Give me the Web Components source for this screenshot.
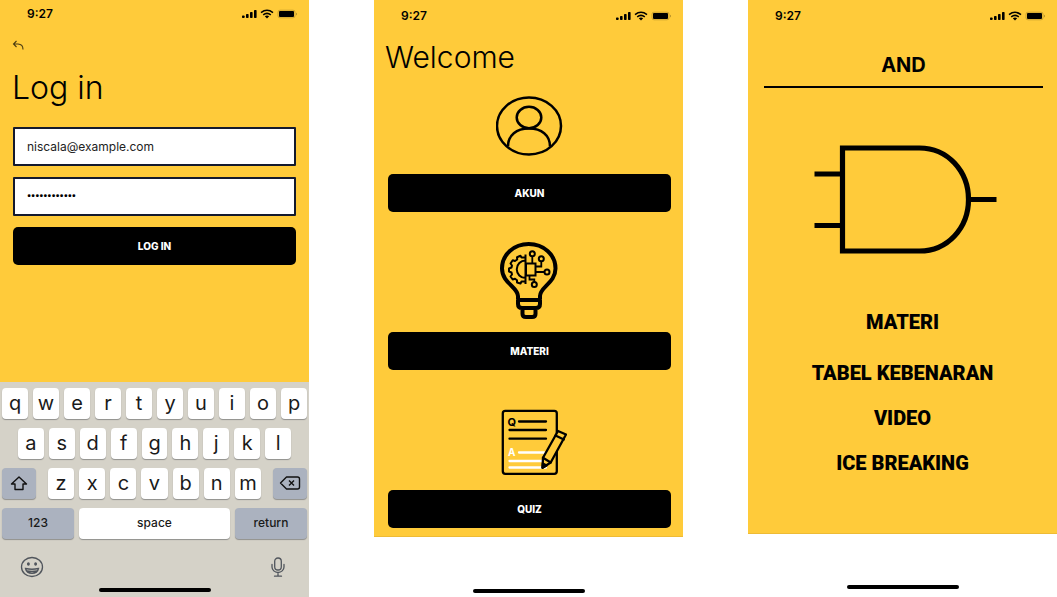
<!DOCTYPE html>
<html lang="id">
<head>
<meta charset="utf-8">
<meta name="viewport" content="width=device-width, initial-scale=1">
<title>Niscala</title>
<style>
  :root { --yellow: #ffcb3a; --ink: #000; }
  body { margin: 0; background: #fff; color: var(--ink); font-family: Inter, "Liberation Sans", sans-serif; }
</style>
</head>
<body>
<app-board></app-board>

<script>
const define = (name, html, setup) => customElements.define(name, class extends HTMLElement {
  constructor() {
    super();
    this.attachShadow({ mode: 'open' }).innerHTML = html;
  }
  connectedCallback() { if (setup) setup(this, this.shadowRoot); }
});

define('status-bar', `
  <style>
    :host { display: flex; align-items: center; justify-content: space-between; height: var(--bar, 32px); padding: 0 12px 0 27px; font-size: 12px; line-height: 16px; font-weight: 600; }
    svg { display: block; }
  </style>
  <span>9:27</span>
  <svg width="55" height="10" viewBox="0 0 55 10" role="img" aria-label="Signal, Wi-Fi, battery">
    <rect x="0" y="6.5" width="2.6" height="2.5" rx=".7"/><rect x="4" y="5" width="2.6" height="4" rx=".7"/>
    <rect x="8" y="3" width="2.6" height="6" rx=".7"/><rect x="12" y="1" width="2.6" height="8" rx=".7"/>
    <g fill="none" stroke="#000" stroke-width="1.6"><path d="M19 3.6Q25 -1 31 3.6"/><path d="M21.2 5.8Q25 3 28.8 5.8"/></g>
    <path d="M22.8 7.2Q25 5.6 27.2 7.2L25 9.4z"/>
    <rect x="36" y="1.2" width="17" height="7.6" rx="2" fill="none" stroke="#000" stroke-opacity=".25" stroke-width=".8"/>
    <rect x="37" y="2.1" width="15" height="5.8" rx="1"/><path d="M54 3.8v2.6q1-.4 1-1.3T54 3.8z" opacity=".3"/>
  </svg>`);

define('home-indicator', `
  <style>:host { display: block; width: 112px; height: 4px; border-radius: 2px; background: #000; margin: 0 auto; }</style>`);

define('solid-button', `
  <style>
    :host { display: block; }
    button { display: block; width: 100%; height: 38px; border: 0; border-radius: 5px; background: #000; color: #fff; font: 800 10px/16px Inter, "Liberation Sans", sans-serif; padding: 0; }
  </style>
  <button type="button"><slot></slot></button>`);

define('text-field', `
  <style>
    :host { display: block; }
    input { display: block; box-sizing: border-box; width: 100%; height: 39px; border: 2px solid #141a2e; border-radius: 1px; padding: 0 12px; background: #fff; color: #222; font: 400 12px/16px Inter, sans-serif; outline: 0; }
    input[type=password] { font-family: Roboto, sans-serif; font-size: 11px; font-weight: 900; color: #000; }
  </style>
  <input>`,
  (el, root) => {
    const input = root.querySelector('input');
    input.type = el.getAttribute('type');
    input.setAttribute('aria-label', el.getAttribute('name'));
    input.value = el.getAttribute('value');
  });

define('key-cap', `
  <style>
    :host { display: block; flex: 1 1 0; min-width: 0; }
    :host([side]) { flex: 0 0 34px; }
    :host([wide]) { flex: 72 1 0; }
    :host([space]) { flex: 151 1 0; }
    button { display: flex; align-items: center; justify-content: center; width: 100%; height: 31px; padding: 0 0 2px; border: 0; border-radius: 4px; background: #fff; color: #1a1a1a; box-shadow: 0 1px 1px #8f8f8c; font: 400 20px/24px Inter, sans-serif; }
    :host([wide]) button, :host([side]) button { background: #abb2bf; }
    :host([wide]) button, :host([space]) button { font-size: 12px; font-weight: 500; }
  </style>
  <button type="button"><slot></slot></button>`);

define('soft-keyboard', `
  <style>
    :host { display: flex; flex-direction: column; gap: 9px; padding: 6px 2px 5px; background: #d5d2c8; box-sizing: border-box; }
    .row { display: flex; gap: 5px; }
    .second { padding: 0 16px; }
    .letters { flex: 1; display: flex; gap: 5px; margin: 0 7px; }
    .tools { display: flex; justify-content: space-between; padding: 7px 22px 0 18px; flex: 1; }
    .tools button { padding: 0; border: 0; background: none; height: 24px; }
    svg { display: block; }
  </style>
  <div class="row" id="r1"></div>
  <div class="row second" id="r2"></div>
  <div class="row">
    <key-cap side><svg width="18" height="16" viewBox="0 0 18 16" fill="none" stroke="#111" stroke-width="1.4" stroke-linejoin="round" role="img" aria-label="Shift"><path d="M9 2L1.5 9H5v5.5h8V9h3.5z"/></svg></key-cap>
    <div class="letters" id="r3"></div>
    <key-cap side><svg width="22" height="16" viewBox="0 0 22 16" fill="none" stroke="#111" stroke-width="1.4" stroke-linejoin="round" role="img" aria-label="Delete"><path d="M7.5 2H18.5q2 0 2 2v8q0 2-2 2H7.5L1.5 8z"/><path d="M10 5.5l5 5M15 5.5l-5 5"/></svg></key-cap>
  </div>
  <div class="row"><key-cap wide>123</key-cap><key-cap space>space</key-cap><key-cap wide>return</key-cap></div>
  <div class="tools">
    <button type="button" aria-label="Emoji"><svg width="24" height="22" viewBox="0 0 24 22" fill="none" stroke="#50555c" stroke-width="1.3"><ellipse cx="12" cy="11" rx="10.5" ry="9.5"/><path d="M5.5 12.5Q12 14 18.5 12.5Q17.5 17.3 12 17.3T5.5 12.5zM7 15Q12 16 17 15"/><ellipse cx="8.4" cy="8" rx=".8" ry="1.1" fill="#50555c"/><ellipse cx="15.6" cy="8" rx=".8" ry="1.1" fill="#50555c"/></svg></button>
    <button type="button" aria-label="Dictate"><svg width="14" height="22" viewBox="0 0 14 22" fill="none" stroke="#50555c" stroke-width="1.3" stroke-linecap="round"><rect x="3.7" y="2" width="6.6" height="12" rx="3.3"/><path d="M1 8.5v2.5a6 5.5 0 0 0 12 0V8.5M7 16.5V20M3.5 20.2h7"/></svg></button>
  </div>
  <home-indicator></home-indicator>`,
  (el, root) => {
    ['qwertyuiop', 'asdfghjkl', 'zxcvbnm'].forEach((letters, i) => {
      root.getElementById('r' + (i + 1)).innerHTML = [...letters].map(c => `<key-cap>${c}</key-cap>`).join('');
    });
  });

define('login-screen', `
  <style>
    :host { --bar: 27px; display: flex; flex-direction: column; min-height: 100vh; background: var(--yellow); }
    .back { display: block; border: 0; background: none; padding: 0; margin: 13px 0 0 12px; }
    svg { display: block; }
    h1 { margin: 17px 12px 19px; font-size: 32px; line-height: 40px; font-weight: 300; }
    form { display: flex; flex-direction: column; gap: 11px; padding: 0 13px; }
    soft-keyboard { margin-top: auto; height: 215px; }
  </style>
  <status-bar></status-bar>
  <button class="back" type="button" aria-label="Back"><svg width="12" height="11" viewBox="0 0 12 11" fill="none" stroke="#4a3b12" stroke-width="1.1"><path d="M4.5 1L1.5 4l3 3M1.5 4H6q5 .2 5 5.5"/></svg></button>
  <h1>Log in</h1>
  <form>
    <text-field name="Email" type="email" value="niscala@example.com"></text-field>
    <text-field name="Password" type="password" value="niscala12345"></text-field>
    <solid-button>LOG IN</solid-button>
  </form>
  <soft-keyboard></soft-keyboard>`);

define('menu-card', `
  <style>
    :host { display: block; }
    .picture { display: flex; align-items: flex-end; justify-content: center; height: 90px; box-sizing: border-box; padding-bottom: 13px; }
  </style>
  <div class="picture"><slot name="picture"></slot></div>
  <solid-button><slot></slot></solid-button>`);

define('welcome-screen', `
  <style>
    :host { display: flex; flex-direction: column; min-height: 100vh; }
    main { background: var(--yellow); border-bottom: 1px solid #eebb35; padding-bottom: 8px; }
    h1 { margin: 5px 11px 7px; font-size: 30px; line-height: 40px; font-weight: 300; }
    nav { display: grid; gap: 30px; padding: 0 12px 0 14px; }
    svg { display: block; }
    home-indicator { margin-top: auto; margin-bottom: 4px; }
  </style>
  <main>
    <status-bar></status-bar>
    <h1>Welcome</h1>
    <nav>
      <menu-card>AKUN
        <svg slot="picture" width="67" height="65" viewBox="0 0 67 65" fill="none" stroke="#000" stroke-width="2.5"><ellipse cx="33" cy="30" rx="32" ry="28.5"/><ellipse cx="33" cy="21.5" rx="12.3" ry="10.7"/><path d="M12 50.5C12 39 20.5 32.5 33 32.5S54 39 54 50.5"/></svg>
      </menu-card>
      <menu-card>MATERI
        <svg slot="picture" width="60" height="77" viewBox="0 0 60 77" fill="none" stroke="#000" stroke-width="2">
          <path stroke-width="4" stroke-linejoin="round" d="M18 57V54C18 45 2 41 2 26.5C2 12.5 14 2 28.7 2S55.5 12.5 55.5 26.5C55.5 41 40 45 40 54V57M18 58H40V62Q40 66 36 66H22Q18 66 18 62zM22.5 67V72Q22.5 75 26 75H32Q35.5 75 35.5 72V67"/>
          <path d="M25.5 12.5V42M25.5 18.5A8.7 8.7 0 0 0 25.5 36"/>
          <path stroke-linejoin="round" d="M25 15.5H21.5L20.5 13.8L17 15.2L17.2 17.5L15 19L12.7 18.2L10.5 21.5L12 23.5L11.5 25.5L9 26.5V29.5L11.5 30.5L12 32.5L10.5 34.5L12.7 37.5L15 36.8L17 38.3L17 40.5L20.5 41.5L21.5 39.5H25"/>
          <rect x="26" y="21.5" width="9.5" height="12"/>
          <path stroke-width="1.8" d="M32.3 14V21M35 24.5H41.3V19.5M35 30H44M29.5 33.5V37.5H34.3V40"/>
          <circle cx="32.3" cy="11.7" r="2.5"/><circle cx="41.3" cy="16.8" r="2.5"/><circle cx="47" cy="30" r="2.5"/><circle cx="34.3" cy="42.5" r="2.5"/>
        </svg>
      </menu-card>
      <menu-card>QUIZ
        <svg slot="picture" width="75" height="68" viewBox="-9 0 75 68" fill="none" stroke="#000" stroke-width="2.3" stroke-linecap="round" stroke-linejoin="round">
          <rect x="1.8" y="1.8" width="54" height="63" rx="2.5"/>
          <path d="M18 12.5H45M8.5 21H45M8.5 29.7H45"/>
          <path stroke="#fff" d="M18 43.5H43M8.5 52H41M8.5 58.5H45"/>
          <text x="6.5" y="16.5" fill="#000" stroke="none" font-size="11" font-weight="700" font-family="Inter, sans-serif">Q</text>
          <text x="7" y="46.5" fill="#fff" stroke="none" font-size="10" font-weight="700" font-family="Inter, sans-serif">A</text>
          <path fill="#ffcb3a" d="M57 22L65 25.5L49.7 53.5L41.5 58.7L42 48.7z"/><path d="M54.5 26.5L62.8 30.5M42 48.7L49.7 53.5"/><path fill="#000" d="M41.5 58.7L41.8 54.5L45.5 56.5z"/>
        </svg>
      </menu-card>
    </nav>
  </main>
  <home-indicator></home-indicator>`);

define('gate-screen', `
  <style>
    :host { --bar: 31px; display: flex; flex-direction: column; min-height: 100vh; }
    main { background: var(--yellow); border-bottom: 1px solid #eebb35; padding-bottom: 58px; }
    h1 { margin: 22px 14px 0 16px; padding-bottom: 9px; border-bottom: 2px solid #000; text-align: center; font-size: 20px; line-height: 24px; font-weight: 700; }
    svg { display: block; margin: 57px auto 56px; }
    nav { display: flex; flex-direction: column; align-items: center; gap: 21px; font: 900 20px/24px Roboto, sans-serif; }
    a { color: inherit; text-decoration: none; }
    a:first-child { margin-bottom: 6px; }
    home-indicator { margin-top: auto; margin-bottom: 8px; }
  </style>
  <main>
    <status-bar></status-bar>
    <h1>AND</h1>
    <svg width="189" height="109" viewBox="-6 0 189 109" fill="none" stroke="#000" stroke-width="5.2" role="img" aria-label="AND gate"><path d="M28.5 3H105.5C133.5 3 154.5 26 154.5 54.5S133.5 106 105.5 106H28.5zM.5 29H28.5M.5 80.5H28.5M154.5 54.5H182.5"/></svg>
    <nav><a href="#materi">MATERI</a><a href="#tabel">TABEL KEBENARAN</a><a href="#video">VIDEO</a><a href="#ice">ICE BREAKING</a></nav>
  </main>
  <home-indicator></home-indicator>`);

define('app-board', `
  <style>:host { display: grid; grid-template-columns: repeat(3, minmax(0, 1fr)); column-gap: 65px; }</style>
  <login-screen></login-screen><welcome-screen></welcome-screen><gate-screen></gate-screen>`);
</script>
</body>
</html>
